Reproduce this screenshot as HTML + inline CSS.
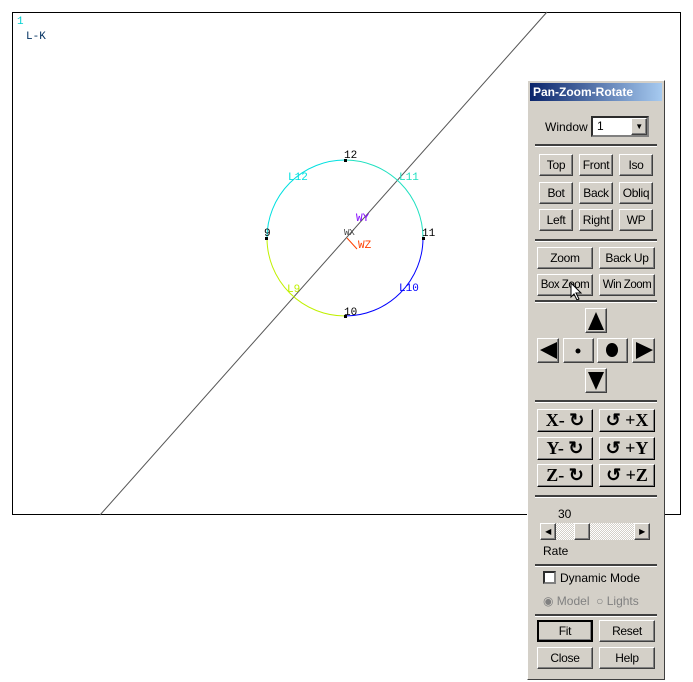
<!DOCTYPE html>
<html><head><meta charset="utf-8"><style>
body{margin:0;width:693px;height:682px;background:#fff;position:relative;overflow:hidden;font-family:"Liberation Sans",sans-serif;font-size:12px}
.a{position:absolute;white-space:nowrap}
.panel{left:527px;top:80px;width:138px;height:600px;background:#d4d0c8;border:1px solid #fff;border-right-color:#404040;border-bottom-color:#404040;box-sizing:border-box}
.btn{position:absolute;white-space:nowrap;overflow:hidden;background:#d4d0c8;box-sizing:border-box;border:1px solid;border-color:#fff #404040 #404040 #fff;box-shadow:inset -1px -1px 0 #808080;text-align:center;color:#000;font-size:12px;letter-spacing:-0.3px}
.sep{position:absolute;left:535px;width:122px;height:2px;background:#404040;border-bottom:1px solid #fff}
.rb{font-family:"Liberation Serif",serif;font-weight:bold;font-size:18px;line-height:21px;letter-spacing:0}
</style></head><body>
<svg class="a" style="left:0;top:0" width="693" height="682">
<rect x="12.5" y="12.5" width="668" height="502" fill="none" stroke="#000"/>
<line x1="547" y1="12" x2="100" y2="515" stroke="#555" stroke-width="1"/>
<path d="M267,238 A78,78 0 0 1 345,160" fill="none" stroke="#00e0e0"/>
<path d="M345,160 A78,78 0 0 1 423,238" fill="none" stroke="#20e0c0"/>
<path d="M423,238 A78,78 0 0 1 345,316" fill="none" stroke="#0000ff"/>
<path d="M345,316 A78,78 0 0 1 267,238" fill="none" stroke="#c0f000"/>
<line x1="347" y1="238" x2="357" y2="249" stroke="#ff4000"/>
<g font-family="Liberation Mono,monospace" font-size="11">
<text x="17" y="24" fill="#00d0d0">1</text>
<text x="26" y="39" fill="#003060">L-K</text>
<text x="344" y="158" fill="#000">12</text>
<text x="264" y="236" fill="#000">9</text>
<text x="422" y="236" fill="#000">11</text>
<text x="344" y="315" fill="#000">10</text>
<text x="288" y="180" fill="#00e0e0">L12</text>
<text x="399" y="180" fill="#20e0c0">L11</text>
<text x="287" y="292" fill="#c0f000">L9</text>
<text x="399" y="291" fill="#0000ff">L10</text>
<text x="356" y="221" fill="#8000ff">WY</text>
<text x="358" y="248" fill="#ff4000">WZ</text>
<text x="344" y="235" fill="#404040" font-size="9">WX</text>
</g>
<rect x="344" y="159" width="3" height="3" fill="#000"/><rect x="265" y="237" width="3" height="3" fill="#000"/><rect x="422" y="237" width="3" height="3" fill="#000"/><rect x="344" y="315" width="3" height="3" fill="#000"/>
</svg>
<div class="a panel"></div>
<div class="a" style="left:530px;top:83px;width:132px;height:18px;background:linear-gradient(90deg,#0a246a,#a6caf0);color:#fff;font-weight:bold;font-size:12px;line-height:18px;padding-left:3px;box-sizing:border-box">Pan-Zoom-Rotate</div>
<div class="a" style="left:545px;top:120px">Window</div>
<div class="a" style="left:591px;top:116px;width:58px;height:21px;background:#fff;border:2px inset #808080;box-sizing:border-box;padding-left:4px;line-height:17px">1<div class="btn" style="right:0;top:0;width:16px;height:17px;font-size:8px;line-height:15px">▼</div></div>
<div class="sep" style="top:144px"></div>
<div class="btn" style="left:539px;top:154px;width:34px;height:22px;line-height:20px">Top</div>
<div class="btn" style="left:579px;top:154px;width:34px;height:22px;line-height:20px">Front</div>
<div class="btn" style="left:619px;top:154px;width:34px;height:22px;line-height:20px">Iso</div>
<div class="btn" style="left:539px;top:182px;width:34px;height:22px;line-height:20px">Bot</div>
<div class="btn" style="left:579px;top:182px;width:34px;height:22px;line-height:20px">Back</div>
<div class="btn" style="left:619px;top:182px;width:34px;height:22px;line-height:20px">Obliq</div>
<div class="btn" style="left:539px;top:209px;width:34px;height:22px;line-height:20px">Left</div>
<div class="btn" style="left:579px;top:209px;width:34px;height:22px;line-height:20px">Right</div>
<div class="btn" style="left:619px;top:209px;width:34px;height:22px;line-height:20px">WP</div>
<div class="sep" style="top:239px"></div>
<div class="btn" style="left:537px;top:247px;width:56px;height:22px;line-height:20px">Zoom</div>
<div class="btn" style="left:599px;top:247px;width:56px;height:22px;line-height:20px">Back Up</div>
<div class="btn" style="left:537px;top:274px;width:56px;height:22px;line-height:20px;font-size:11.5px;letter-spacing:-0.5px">Box Zoom</div>
<div class="btn" style="left:599px;top:274px;width:56px;height:22px;line-height:20px;font-size:11.5px;letter-spacing:-0.5px">Win Zoom</div>
<svg class="a" style="left:570px;top:282px" width="14" height="20"><path d="M1,1 L1,15 L4,12 L7,18 L9,17 L6,11 L11,11 Z" fill="#fff" stroke="#000"/></svg>
<div class="sep" style="top:300px"></div>
<div class="btn" style="left:585px;top:308px;width:22px;height:25px"><svg width="20" height="23"><path d="M10,3 L18,21 L2,21Z"/></svg></div>
<div class="btn" style="left:537px;top:338px;width:22px;height:25px"><svg width="20" height="23"><path d="M2,11 L19,3 L19,20Z"/></svg></div>
<div class="btn" style="left:563px;top:338px;width:31px;height:25px"><svg width="29" height="23"><circle cx="14" cy="12" r="2.5"/></svg></div>
<div class="btn" style="left:597px;top:338px;width:31px;height:25px"><svg width="29" height="23"><ellipse cx="14" cy="11" rx="6" ry="7"/></svg></div>
<div class="btn" style="left:632px;top:338px;width:23px;height:25px"><svg width="20" height="23"><path d="M19,11 L2,3 L2,20Z"/></svg></div>
<div class="btn" style="left:585px;top:368px;width:22px;height:25px"><svg width="20" height="23"><path d="M10,21 L18,3 L2,3Z"/></svg></div>
<div class="sep" style="top:400px"></div>
<div class="btn rb" style="left:537px;top:409px;width:56px;height:23px;border-color:#fff #000 #000 #fff">X- ↻</div>
<div class="btn rb" style="left:599px;top:409px;width:56px;height:23px;border-color:#fff #000 #000 #fff">↺ +X</div>
<div class="btn rb" style="left:537px;top:437px;width:56px;height:23px;border-color:#fff #000 #000 #fff">Y- ↻</div>
<div class="btn rb" style="left:599px;top:437px;width:56px;height:23px;border-color:#fff #000 #000 #fff">↺ +Y</div>
<div class="btn rb" style="left:537px;top:464px;width:56px;height:23px;border-color:#fff #000 #000 #fff">Z- ↻</div>
<div class="btn rb" style="left:599px;top:464px;width:56px;height:23px;border-color:#fff #000 #000 #fff">↺ +Z</div>
<div class="sep" style="top:495px"></div>
<div class="a" style="left:558px;top:507px">30</div>
<div class="a" style="left:540px;top:523px;width:110px;height:17px;background:repeating-conic-gradient(#fff 0 25%,#d4d0c8 0 50%) 0 0/2px 2px"></div>
<div class="btn" style="left:540px;top:523px;width:16px;height:17px;font-size:8px;line-height:15px">◀</div>
<div class="btn" style="left:574px;top:523px;width:16px;height:17px"></div>
<div class="btn" style="left:634px;top:523px;width:16px;height:17px;font-size:8px;line-height:15px">▶</div>
<div class="a" style="left:543px;top:544px">Rate</div>
<div class="sep" style="top:564px"></div>
<div class="a" style="left:543px;top:571px;width:13px;height:13px;background:#fff;border:2px inset #808080;box-sizing:border-box"></div>
<div class="a" style="left:560px;top:571px">Dynamic Mode</div>
<div class="a" style="left:543px;top:594px;color:#808080">◉ Model &nbsp;○ Lights</div>
<div class="sep" style="top:614px"></div>
<div class="btn" style="left:537px;top:620px;width:56px;height:22px;line-height:18px;border:2px solid #000">Fit</div>
<div class="btn" style="left:599px;top:620px;width:56px;height:22px;line-height:20px">Reset</div>
<div class="btn" style="left:537px;top:647px;width:56px;height:22px;line-height:20px">Close</div>
<div class="btn" style="left:599px;top:647px;width:56px;height:22px;line-height:20px">Help</div>
</body></html>
